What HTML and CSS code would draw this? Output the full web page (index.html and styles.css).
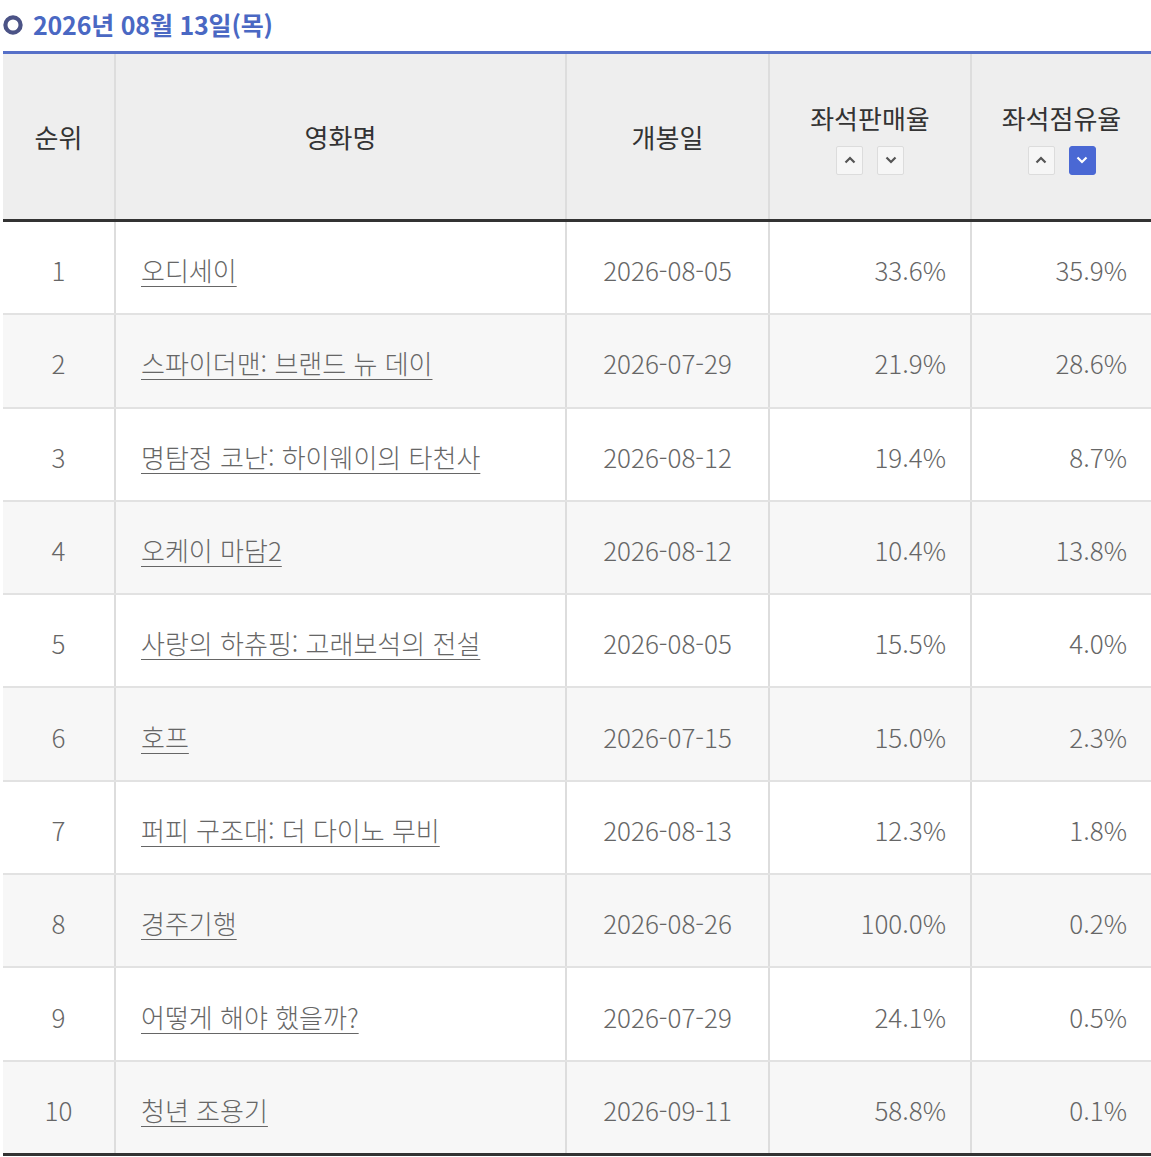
FILE: index.html
```html
<!DOCTYPE html>
<html lang="ko">
<head>
<meta charset="utf-8">
<title>좌석점유율</title>
<link rel="stylesheet" href="styles.css">
</head>
<body>
<div class="wrap">
  <h2 class="title">
    <svg class="ring" width="20" height="20" viewBox="0 0 20 20" aria-hidden="true">
      <circle cx="10" cy="10" r="7.6" fill="none" stroke="#4b5386" stroke-width="4.2"/>
    </svg>
    <span>2026년 08월 13일(목)</span>
  </h2>
  <table class="rank">
    <colgroup>
      <col class="c-rank"><col class="c-title"><col class="c-date"><col class="c-sale"><col class="c-occ">
    </colgroup>
    <thead>
      <tr>
        <th>순위</th>
        <th>영화명</th>
        <th>개봉일</th>
        <th>
          <div class="th-label">좌석판매율</div>
          <div class="sort">
            <span class="sbtn"><svg width="12" height="8" viewBox="0 0 12 8"><path d="M1.5 6.5 L6 2 L10.5 6.5" fill="none" stroke="#555" stroke-width="2.2"/></svg></span>
            <span class="sbtn"><svg width="12" height="8" viewBox="0 0 12 8"><path d="M1.5 1.5 L6 6 L10.5 1.5" fill="none" stroke="#555" stroke-width="2.2"/></svg></span>
          </div>
        </th>
        <th>
          <div class="th-label">좌석점유율</div>
          <div class="sort">
            <span class="sbtn"><svg width="12" height="8" viewBox="0 0 12 8"><path d="M1.5 6.5 L6 2 L10.5 6.5" fill="none" stroke="#555" stroke-width="2.2"/></svg></span>
            <span class="sbtn active"><svg width="12" height="8" viewBox="0 0 12 8"><path d="M1.5 1.5 L6 6 L10.5 1.5" fill="none" stroke="#fff" stroke-width="2.2"/></svg></span>
          </div>
        </th>
      </tr>
    </thead>
    <tbody>
      <tr><td class="num">1</td><td class="name"><a href="#">오디세이</a></td><td class="date">2026-08-05</td><td class="pct">33.6%</td><td class="pct">35.9%</td></tr>
      <tr><td class="num">2</td><td class="name"><a href="#">스파이더맨: 브랜드 뉴 데이</a></td><td class="date">2026-07-29</td><td class="pct">21.9%</td><td class="pct">28.6%</td></tr>
      <tr><td class="num">3</td><td class="name"><a href="#">명탐정 코난: 하이웨이의 타천사</a></td><td class="date">2026-08-12</td><td class="pct">19.4%</td><td class="pct">8.7%</td></tr>
      <tr><td class="num">4</td><td class="name"><a href="#">오케이 마담2</a></td><td class="date">2026-08-12</td><td class="pct">10.4%</td><td class="pct">13.8%</td></tr>
      <tr><td class="num">5</td><td class="name"><a href="#">사랑의 하츄핑: 고래보석의 전설</a></td><td class="date">2026-08-05</td><td class="pct">15.5%</td><td class="pct">4.0%</td></tr>
      <tr><td class="num">6</td><td class="name"><a href="#">호프</a></td><td class="date">2026-07-15</td><td class="pct">15.0%</td><td class="pct">2.3%</td></tr>
      <tr><td class="num">7</td><td class="name"><a href="#">퍼피 구조대: 더 다이노 무비</a></td><td class="date">2026-08-13</td><td class="pct">12.3%</td><td class="pct">1.8%</td></tr>
      <tr><td class="num">8</td><td class="name"><a href="#">경주기행</a></td><td class="date">2026-08-26</td><td class="pct">100.0%</td><td class="pct">0.2%</td></tr>
      <tr><td class="num">9</td><td class="name"><a href="#">어떻게 해야 했을까?</a></td><td class="date">2026-07-29</td><td class="pct">24.1%</td><td class="pct">0.5%</td></tr>
      <tr><td class="num">10</td><td class="name"><a href="#">청년 조용기</a></td><td class="date">2026-09-11</td><td class="pct">58.8%</td><td class="pct">0.1%</td></tr>
    </tbody>
  </table>
</div>
</body>
</html>
```

FILE: styles.css
```css
html, body {
  margin: 0;
  padding: 0;
  background: #fff;
}

body {
  font-family: "Noto Sans CJK KR", "Noto Sans", sans-serif;
}

.wrap {
  padding: 0 0 0 3px;
}

.title {
  display: flex;
  align-items: center;
  gap: 10px;
  margin: 0;
  padding: 6px 0 0 0;
  height: 35px;
  font-size: 25px;
  font-weight: 700;
  color: #4a68c3;
  line-height: 34px;
  letter-spacing: -0.2px;
}

.ring {
  flex: none;
  margin-top: 2px;
}

.rank {
  width: 1148px;
  margin-top: 10px;
  border-collapse: collapse;
  table-layout: fixed;
  border-top: 3px solid #5670c8;
  border-bottom: 3px solid #333;
}

.c-rank { width: 112px; }
.c-title { width: 451px; }
.c-date { width: 203px; }
.c-sale { width: 202px; }
.c-occ { width: 180px; }

.rank th {
  height: 165px;
  padding: 0;
  background: #eee;
  color: #333;
  font-size: 26px;
  font-weight: 400;
  text-align: center;
  vertical-align: middle;
  border-left: 2px solid #ddd;
  border-bottom: 3px solid #333;
}

.rank th:first-child,
.rank td:first-child {
  border-left: none;
}

.th-label {
  line-height: 34px;
  padding-top: 2px;
}

.sort {
  display: flex;
  justify-content: center;
  gap: 14px;
  margin-top: 11px;
}

.sbtn {
  width: 27px;
  height: 29px;
  box-sizing: border-box;
  display: flex;
  align-items: center;
  justify-content: center;
  background: #f6f6f6;
  border: 1px solid #dcdcdc;
  border-radius: 2px;
}

.sbtn.active {
  background: #4a68d4;
  border-color: #4a68d4;
  border-radius: 3px;
}

.rank td {
  height: 87.3px;
  padding: 4px 0 0 0;
  color: #666;
  font-size: 26px;
  font-weight: 300;
  vertical-align: middle;
  border-left: 2px solid #ddd;
  border-bottom: 2px solid #e2e2e2;
}

.rank tbody tr:nth-child(even) td {
  background: #f7f7f7;
}

.rank tbody tr:last-child td {
  border-bottom: 3px solid #333;
}

.num {
  text-align: center;
}

.name {
  text-align: left;
  padding-left: 25px !important;
}

.name a {
  color: #666;
  text-decoration: underline;
  text-underline-offset: 5px;
  text-decoration-thickness: 1px;
}

.date {
  text-align: center;
}

.pct {
  text-align: right;
  padding-right: 24px !important;
}
```
